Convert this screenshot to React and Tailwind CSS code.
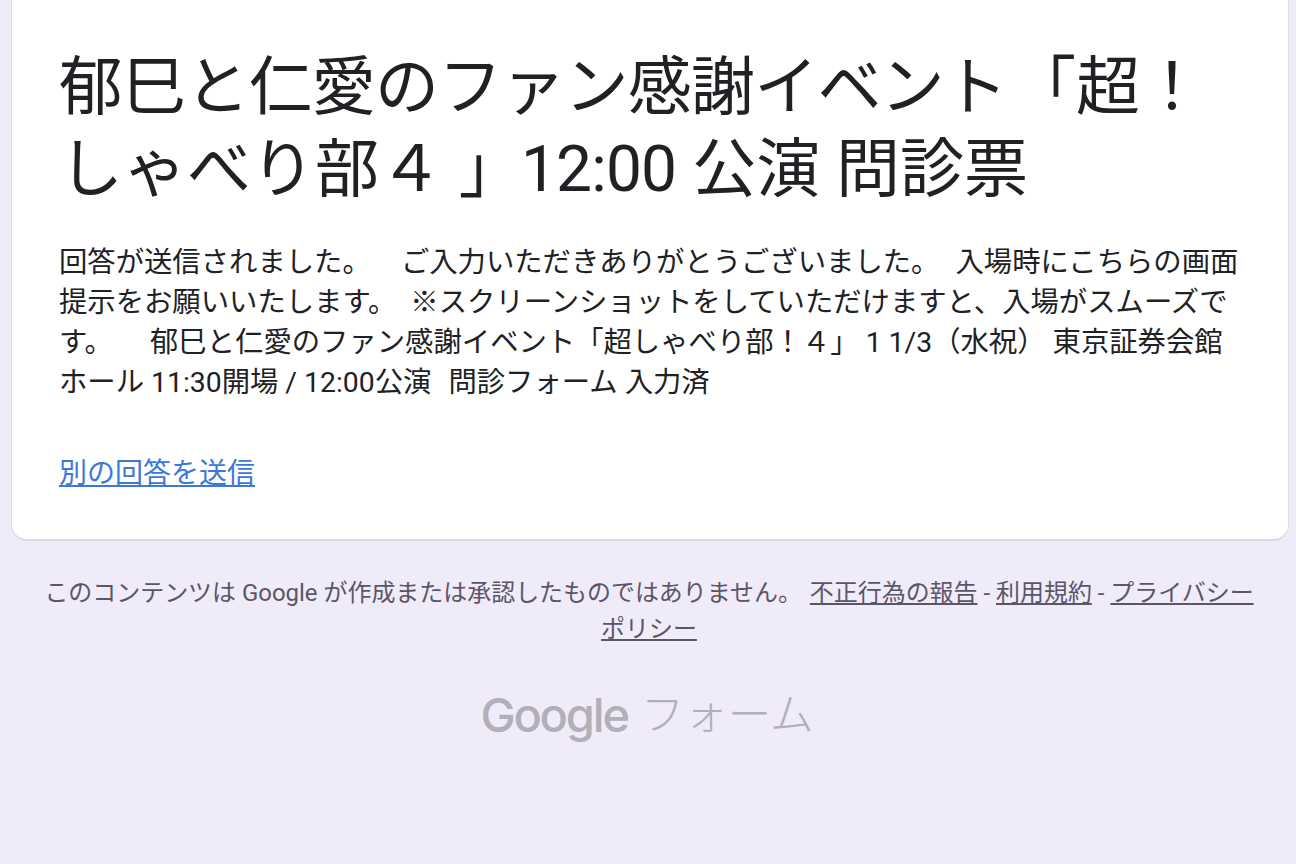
import React from 'react';

function App() {
  return (
    <div className="h-[864px] overflow-hidden bg-[#f0ebf8] pl-[11px] pr-[7px] font-['Roboto','Noto_Sans_CJK_JP',sans-serif]">
      <div className="h-[542px] -mt-px rounded-b-[16px] border border-t-0 border-b-2 border-[#dadce0] bg-white pl-[47px] pr-[30px] pt-[48px]">
        <h1 className="text-[64px] leading-[82px] text-[#202124] whitespace-nowrap">
          <span className="tracking-[-0.8px]">郁巳と仁愛のファン感謝イベント</span><span className="ml-[5px]">「超！</span><br />しゃべり部４ 」<span className="-ml-[2px] tracking-[-0.8px]">12:00</span> 公演 問診票
        </h1>
        <p className="mt-[32px] text-[28.35px] leading-[40px] text-[#202124] whitespace-pre">
          回答が送信されました。    <span className="ml-[2px]">ご入力いただきありがとうございました。</span>  <span className="ml-[2px]">入場時にこちらの画面</span><br />
          提示をお願いいたします。  ※スクリーンショットをしていただけますと、入場がスムーズで<br />
          す。     <span className="ml-[2px]">郁巳と仁愛のファン感謝イベント「超しゃべり部！４」 1 1/3（水祝） 東京証券会館</span><br />
          ホール 11:30開場 / 12:00公演  <span className="ml-[3px]">問診フォーム 入力済</span>
        </p>
        <div className="mt-[51px] text-[28px] leading-[40px]">
          <a href="#" className="text-[#3b78d8] underline">別の回答を送信</a>
        </div>
      </div>
      <div className="mt-[34px] -ml-[2px] text-center text-[23.96px] leading-[36px] text-[#5a5668]">
        このコンテンツは Google が作成または承認したものではありません。 <a href="#" className="ml-[2px] underline">不正行為の報告</a> - <a href="#" className="underline">利用規約</a> - <a href="#" className="underline">プライバシー<br />ポリシー</a>
      </div>
      <div className="mt-[36px] -ml-[6px] flex items-center justify-center text-[#b1afb9]">
        <span className="font-['Inter',sans-serif] text-[47px] leading-[60px] font-medium tracking-[-2.2px]">Google</span>
        <span className="ml-[13px] mt-[3px] text-[43.5px] leading-[60px] font-light">フォーム</span>
      </div>
    </div>
  );
}

export default App;
